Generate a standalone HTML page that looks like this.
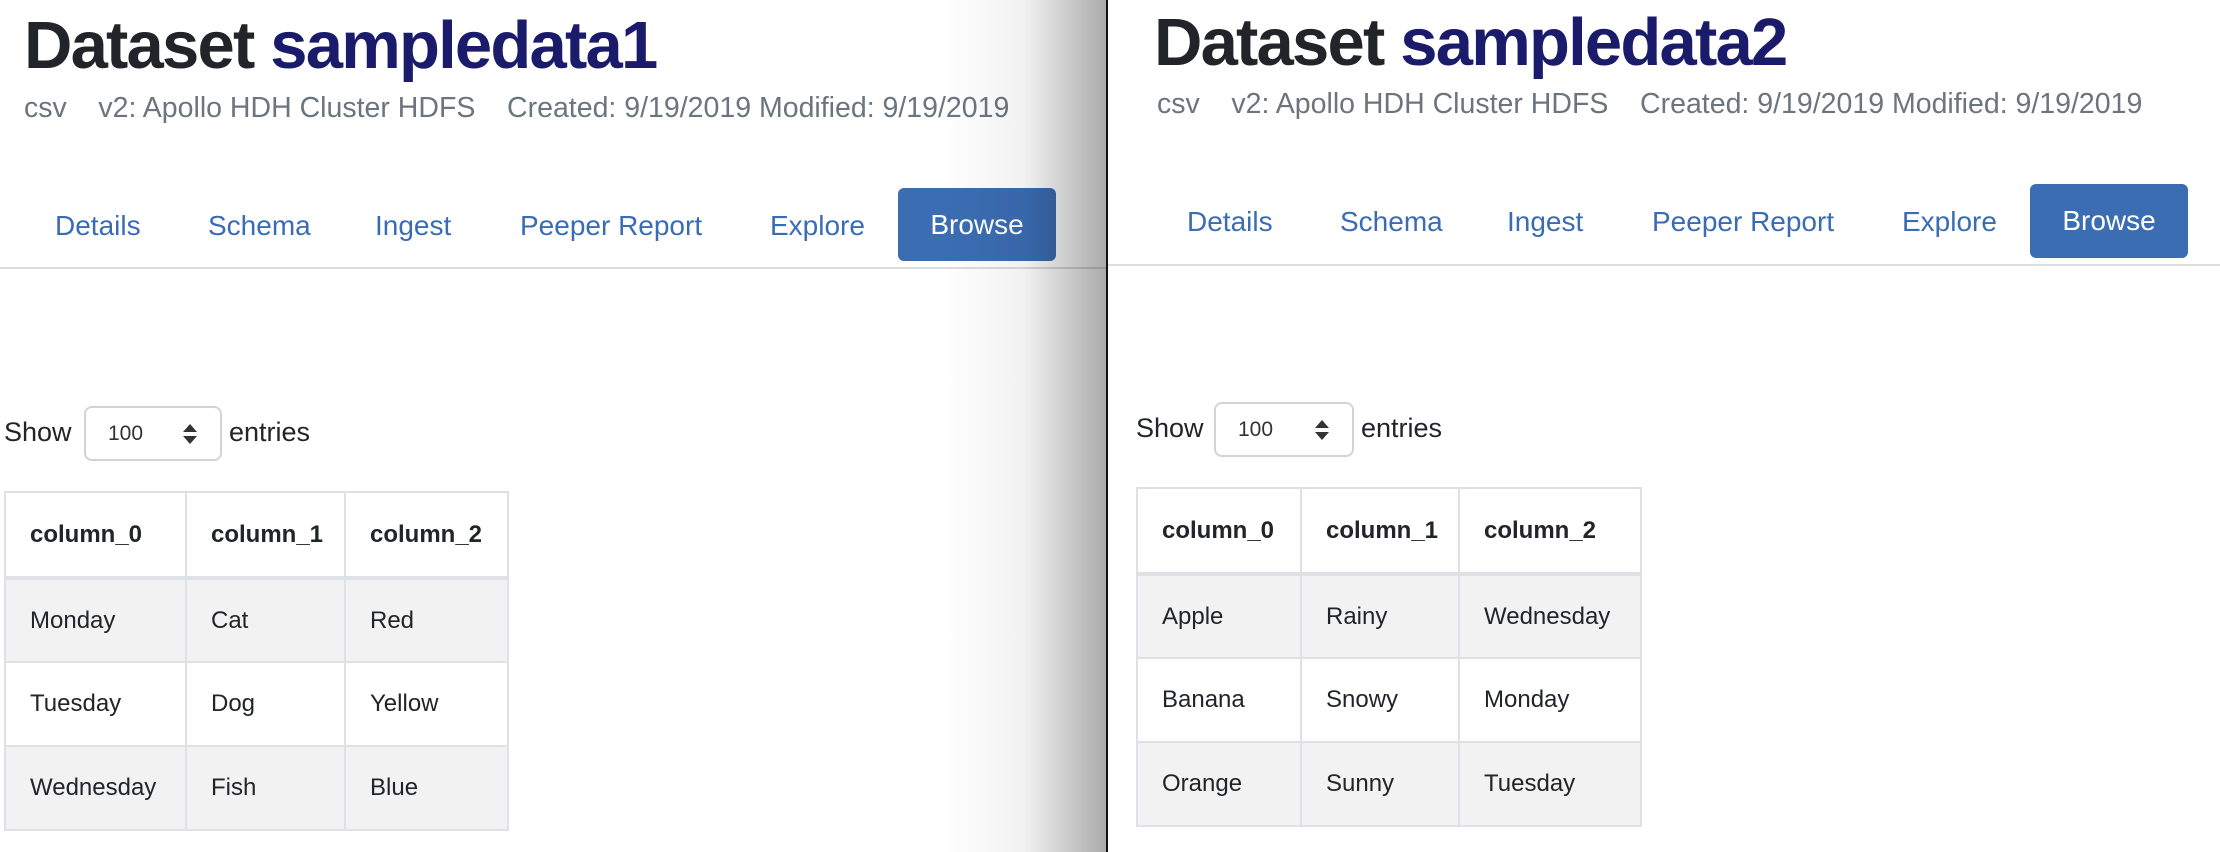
<!DOCTYPE html>
<html><head><meta charset="utf-8"><style>
*{margin:0;padding:0;box-sizing:border-box}
body{width:2220px;height:852px;background:#fff;font-family:"Liberation Sans",Arial,sans-serif;position:relative;overflow:hidden;color:#212529}
.a{position:absolute;white-space:nowrap}
.title{font-size:67px;font-weight:bold;letter-spacing:-1.8px;line-height:1}
.title span{color:#1b1b6b}
.sub{font-size:28.5px;color:#6c757d;line-height:1}
.nav{font-size:28px;color:#3a6cb4;line-height:1}
.btn{background:#3b6db3;color:#fff;border-radius:6px;font-size:28px;display:flex;align-items:center;justify-content:center}
.hr{height:2px;background:#dcdcdc}
.lbl{font-size:27px;line-height:1}
.sel{border:2px solid #d0d4d8;border-radius:8px;font-size:21px;color:#333}
.sel .v{position:absolute;left:22px;top:50%;transform:translateY(-50%)}
.sel svg{position:absolute;right:22px;top:50%;transform:translateY(-50%)}
table{position:absolute;border-collapse:collapse;font-size:24px;table-layout:fixed}
td,th{border:2px solid #dee2e6;text-align:left;padding:0 0 0 24px;height:84px}
th{font-weight:bold;height:86px;border-bottom:4px solid #dee2e6}
tr.g td{background:#f2f2f2}
</style></head><body>

<!-- Left panel -->
<div class="a title" style="left:24px;top:12px">Dataset <span>sampledata1</span></div>
<div class="a sub" style="left:24px;top:94px">csv&nbsp;&nbsp;&nbsp; v2: Apollo HDH Cluster HDFS&nbsp;&nbsp;&nbsp; Created: 9/19/2019 Modified: 9/19/2019</div>
<div class="a nav" style="left:55px;top:212px">Details</div>
<div class="a nav" style="left:208px;top:212px">Schema</div>
<div class="a nav" style="left:375px;top:212px">Ingest</div>
<div class="a nav" style="left:520px;top:212px">Peeper Report</div>
<div class="a nav" style="left:770px;top:212px">Explore</div>
<div class="a btn" style="left:898px;top:188px;width:158px;height:73px">Browse</div>
<div class="a hr" style="left:0;top:267px;width:1108px"></div>
<div class="a lbl" style="left:4px;top:419px">Show</div>
<div class="a sel" style="left:84px;top:406px;width:138px;height:55px"><span class="v">100</span><svg width="16" height="24" viewBox="0 0 16 24"><path d="M8 2 L15 10 H1Z M8 22 L15 14 H1Z" fill="#333"/></svg></div>
<div class="a lbl" style="left:229px;top:419px">entries</div>
<table style="left:4px;top:491px;width:503px">
<colgroup><col style="width:181px"><col style="width:159px"><col style="width:163px"></colgroup>
<tr><th>column_0</th><th>column_1</th><th>column_2</th></tr>
<tr class="g"><td>Monday</td><td>Cat</td><td>Red</td></tr>
<tr><td>Tuesday</td><td>Dog</td><td>Yellow</td></tr>
<tr class="g"><td>Wednesday</td><td>Fish</td><td>Blue</td></tr>
</table>

<!-- shadow / divider -->
<div class="a" style="left:940px;top:0;width:166px;height:852px;background:linear-gradient(to right,rgba(0,0,0,0),rgba(0,0,0,0.05) 50%,rgba(0,0,0,0.33))"></div>
<div class="a" style="left:1106px;top:0;width:2px;height:852px;background:#111"></div>

<!-- Right panel -->
<div class="a title" style="left:1154px;top:9px">Dataset <span>sampledata2</span></div>
<div class="a sub" style="left:1157px;top:90px">csv&nbsp;&nbsp;&nbsp; v2: Apollo HDH Cluster HDFS&nbsp;&nbsp;&nbsp; Created: 9/19/2019 Modified: 9/19/2019</div>
<div class="a nav" style="left:1187px;top:208px">Details</div>
<div class="a nav" style="left:1340px;top:208px">Schema</div>
<div class="a nav" style="left:1507px;top:208px">Ingest</div>
<div class="a nav" style="left:1652px;top:208px">Peeper Report</div>
<div class="a nav" style="left:1902px;top:208px">Explore</div>
<div class="a btn" style="left:2030px;top:184px;width:158px;height:74px">Browse</div>
<div class="a hr" style="left:1108px;top:264px;width:1112px"></div>
<div class="a lbl" style="left:1136px;top:415px">Show</div>
<div class="a sel" style="left:1214px;top:402px;width:140px;height:55px"><span class="v">100</span><svg width="16" height="24" viewBox="0 0 16 24"><path d="M8 2 L15 10 H1Z M8 22 L15 14 H1Z" fill="#333"/></svg></div>
<div class="a lbl" style="left:1361px;top:415px">entries</div>
<table style="left:1136px;top:487px;width:504px">
<colgroup><col style="width:164px"><col style="width:158px"><col style="width:182px"></colgroup>
<tr><th>column_0</th><th>column_1</th><th>column_2</th></tr>
<tr class="g"><td>Apple</td><td>Rainy</td><td>Wednesday</td></tr>
<tr><td>Banana</td><td>Snowy</td><td>Monday</td></tr>
<tr class="g"><td>Orange</td><td>Sunny</td><td>Tuesday</td></tr>
</table>
</body></html>
